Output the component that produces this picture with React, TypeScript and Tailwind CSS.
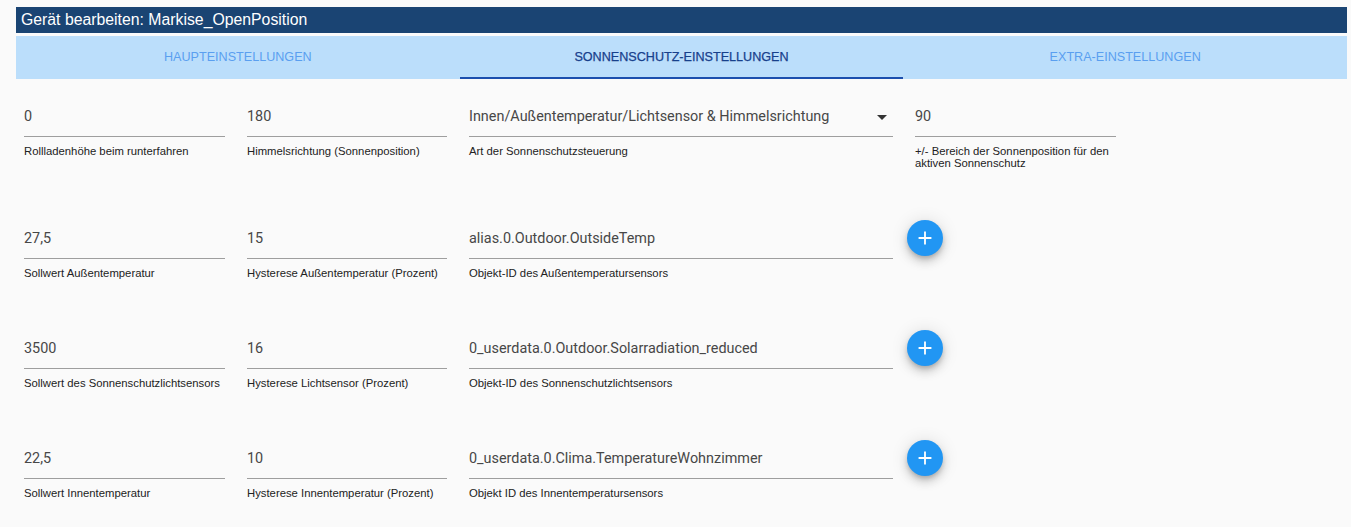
import React from "react";

type Field = { value: string; label: string; width: string; select?: boolean };
type Row = { fields: Field[]; add?: boolean };

const rows: Row[] = [
  {
    fields: [
      { value: "0", label: "Rollladenhöhe beim runterfahren", width: "w-[201px]" },
      { value: "180", label: "Himmelsrichtung (Sonnenposition)", width: "w-[200px]" },
      { value: "Innen/Außentemperatur/Lichtsensor & Himmelsrichtung", label: "Art der Sonnenschutzsteuerung", width: "w-[424px]", select: true },
      { value: "90", label: "+/- Bereich der Sonnenposition für den aktiven Sonnenschutz", width: "w-[201px]" },
    ],
  },
  {
    add: true,
    fields: [
      { value: "27,5", label: "Sollwert Außentemperatur", width: "w-[201px]" },
      { value: "15", label: "Hysterese Außentemperatur (Prozent)", width: "w-[200px]" },
      { value: "alias.0.Outdoor.OutsideTemp", label: "Objekt-ID des Außentemperatursensors", width: "w-[424px]" },
    ],
  },
  {
    add: true,
    fields: [
      { value: "3500", label: "Sollwert des Sonnenschutzlichtsensors", width: "w-[201px]" },
      { value: "16", label: "Hysterese Lichtsensor (Prozent)", width: "w-[200px]" },
      { value: "0_userdata.0.Outdoor.Solarradiation_reduced", label: "Objekt-ID des Sonnenschutzlichtsensors", width: "w-[424px]" },
    ],
  },
  {
    add: true,
    fields: [
      { value: "22,5", label: "Sollwert Innentemperatur", width: "w-[201px]" },
      { value: "10", label: "Hysterese Innentemperatur (Prozent)", width: "w-[200px]" },
      { value: "0_userdata.0.Clima.TemperatureWohnzimmer", label: "Objekt ID des Innentemperatursensors", width: "w-[424px]" },
    ],
  },
];

const tabs = ["Haupteinstellungen", "Sonnenschutz-Einstellungen", "Extra-Einstellungen"];

export default function App() {
  return (
    <div className="min-h-[527px] bg-[#fafafa] pl-4 pr-1 pt-[7px] font-['Liberation_Sans',Arial,sans-serif]">
      <div className="flex h-[26px] items-center bg-[#1a4473] pl-[5px] text-[15.8px] text-white">
        Gerät bearbeiten: Markise_OpenPosition
      </div>

      <div className="mt-[3px] grid h-[43px] grid-cols-3 bg-[#bbdefb]">
        {tabs.map((t, i) => (
          <div
            key={t}
            className={
              i === 1
                ? "flex items-center justify-center border-b-2 border-[#1c4fae] pt-[2px] text-[12.6px] uppercase text-[#17408c] [-webkit-text-stroke:0.25px_#17408c]"
                : "flex items-center justify-center text-[12.6px] uppercase text-[#5a9ff0]"
            }
          >
            {t}
          </div>
        ))}
      </div>

      <div className="pl-2 pt-[17px]">
        {rows.map((row, r) => (
          <div key={r} className="mb-[49px] flex items-start gap-[22px]">
            {row.fields.map((f) => (
              <TextField key={f.label} {...f} />
            ))}
            {row.add && <AddButton />}
          </div>
        ))}
      </div>
    </div>
  );
}

function TextField({ value, label, width, select }: Field) {
  return (
    <div className={width}>
      <div className="flex items-center justify-between border-b border-[#9e9e9e] pt-[11px] pb-[9px]">
        <span className="font-['Roboto',sans-serif] text-[14.4px] leading-[20px] text-[#474747]">{value}</span>
        {select && (
          <svg width="10" height="5" viewBox="0 0 10 5" className="mr-[6px]">
            <path d="M0 0h10L5 5z" fill="#333" />
          </svg>
        )}
      </div>
      <p className="mt-[8px] text-[11.3px] leading-[12px] text-[#222]">{label}</p>
    </div>
  );
}

function AddButton() {
  return (
    <button
      type="button"
      className="-ml-[8px] mt-[2px] flex size-9 items-center justify-center rounded-full bg-[#2196f3] shadow-[0_3px_5px_-1px_rgba(0,0,0,0.2),0_6px_10px_0_rgba(0,0,0,0.14),0_1px_18px_0_rgba(0,0,0,0.12)]"
    >
      <svg width="22" height="22" viewBox="0 0 24 24">
        <path d="M19 13h-6v6h-2v-6H5v-2h6V5h2v6h6v2z" fill="#fff" />
      </svg>
    </button>
  );
}
